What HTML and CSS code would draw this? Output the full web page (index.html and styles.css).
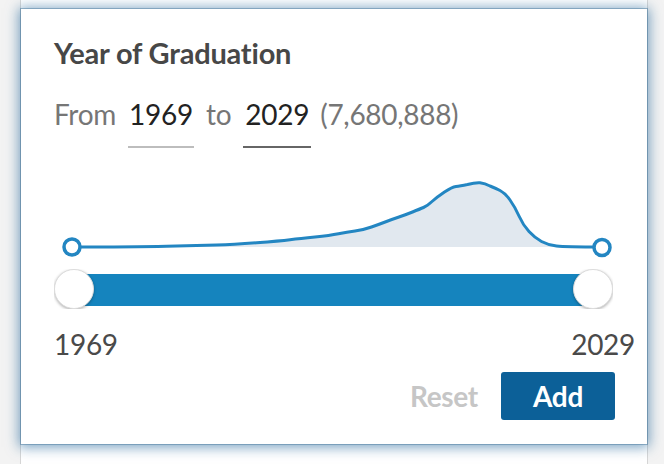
FILE: index.html
```html
<!DOCTYPE html>
<html lang="en">
<head>
<meta charset="utf-8">
<title>Year of Graduation</title>
<link rel="stylesheet" href="styles.css">
</head>
<body>
<div class="panel">
  <div class="card">
    <h2 class="title">Year of Graduation</h2>
    <div class="range-row">
      <span class="muted">From</span>
      <span class="year-input from">1969</span>
      <span class="muted">to</span>
      <span class="year-input to">2029</span>
      <span class="muted count">(7,680,888)</span>
    </div>
    <svg class="chart" width="559" height="90" viewBox="0 0 559 90">
      <path class="area" d="M18,77 Q79,77 112.5,76.25 Q146,75.5 162.5,75 Q179,74.5 202.5,72.75 Q226,71 236,69.75 Q246,68.5 261,67 Q276,65.5 284.5,63.75 Q293,62 301,61 Q309,60 317.5,57 Q326,54 332.5,51.5 Q339,49 345,47 Q351,45 358.5,42 Q366,39 369.5,37.5 Q373,36 378,31.5 Q383,27 390.5,22 Q398,17 402,16.5 Q406,16 413.5,14.5 Q421,12.5 426,12.8 Q431,13.5 436,16 Q441,18 446,20.5 Q451,23 456,30 Q461,37 465,46 Q469,55 475,61.5 Q481,68 487.5,71.5 Q494,75 502.5,76 Q511,77 548,77 Z"/>
      <path class="line" d="M18,77 Q79,77 112.5,76.25 Q146,75.5 162.5,75 Q179,74.5 202.5,72.75 Q226,71 236,69.75 Q246,68.5 261,67 Q276,65.5 284.5,63.75 Q293,62 301,61 Q309,60 317.5,57 Q326,54 332.5,51.5 Q339,49 345,47 Q351,45 358.5,42 Q366,39 369.5,37.5 Q373,36 378,31.5 Q383,27 390.5,22 Q398,17 402,16.5 Q406,16 413.5,14.5 Q421,12.5 426,12.8 Q431,13.5 436,16 Q441,18 446,20.5 Q451,23 456,30 Q461,37 465,46 Q469,55 475,61.5 Q481,68 487.5,71.5 Q494,75 502.5,76 Q511,77 548,77"/>
      <circle class="dot" cx="18" cy="77" r="8"/>
      <circle class="dot" cx="548" cy="77.5" r="8"/>
    </svg>
    <div class="slider">
      <div class="track"></div>
      <span class="thumb"></span>
      <span class="thumb"></span>
    </div>
    <div class="labels">
      <span>1969</span>
      <span>2029</span>
    </div>
    <div class="actions">
      <button class="btn reset" type="button">Reset</button>
      <button class="btn add" type="button">Add</button>
    </div>
  </div>
</div>
</body>
</html>
```

FILE: styles.css
```css
html, body {
  margin: 0;
  padding: 0;
}
body {
  background: #f3f3f3;
  height: 464px;
  overflow: hidden;
  font-family: Lato, "Open Sans", sans-serif;
}
.panel {
  margin-left: 20px;
  width: 628px;
  height: 464px;
  padding-top: 9px;
  box-sizing: border-box;
  background: #fff;
  border-left: 1px solid #d6d6d6;
  border-right: 1px solid #d6d6d6;
}
.card {
  height: 435px;
  box-sizing: border-box;
  padding: 27px 12px 0 33px;
  background: #fff;
  box-shadow: 0 0 0 1px rgba(80, 125, 160, 0.5), 0 1px 12px 2px rgba(25, 95, 150, 0.6);
}
.title {
  margin: 0;
  font-size: 29px;
  line-height: 34px;
  font-weight: 700;
  color: #474747;
  letter-spacing: -0.2px;
}
.range-row {
  margin-top: 27px;
  display: flex;
  align-items: flex-start;
  gap: 12px;
  font-size: 28px;
  line-height: 34px;
  letter-spacing: -0.3px;
}
.muted {
  color: #767676;
}
.count {
  margin-left: -3px;
}
.year-input {
  color: #222;
  text-align: center;
  padding-bottom: 15px;
}
.year-input.from {
  width: 66px;
  border-bottom: 2px solid #bdbdbd;
}
.year-input.to {
  width: 68px;
  border-bottom: 2px solid #666;
}
.chart {
  display: block;
  margin-top: 22px;
}
.area {
  fill: #e1e8ef;
}
.line {
  fill: none;
  stroke: #2386c2;
  stroke-width: 3;
  stroke-linejoin: round;
  stroke-linecap: round;
}
.dot {
  fill: #fff;
  stroke: #2386c2;
  stroke-width: 3.5;
}
.slider {
  position: relative;
  margin-top: 9px;
  width: 559px;
  height: 40px;
  overflow: hidden;
  display: flex;
  justify-content: space-between;
  align-items: center;
}
.track {
  position: absolute;
  left: 20px;
  right: 20px;
  top: 5px;
  height: 32px;
  background: #1584be;
}
.thumb {
  position: relative;
  width: 40px;
  height: 40px;
  box-sizing: border-box;
  border-radius: 50%;
  background: #fff;
  border: 1px solid #dcdcdc;
  box-shadow: 0 1px 3px rgba(0, 0, 0, 0.3);
}
.labels {
  margin-top: 18px;
  display: flex;
  justify-content: space-between;
  font-size: 28px;
  line-height: 34px;
  color: #4a4a4a;
  letter-spacing: -0.3px;
}
.actions {
  margin-top: 11px;
  margin-right: 20px;
  display: flex;
  justify-content: flex-end;
  align-items: center;
  gap: 23px;
}
.btn {
  font-family: Lato, "Open Sans", sans-serif;
  font-size: 28px;
  font-weight: 700;
  line-height: 48px;
  height: 48px;
  border: 0;
  padding: 0;
  margin: 0;
  letter-spacing: -0.3px;
}
.reset {
  background: none;
  color: #c6c6c6;
}
.add {
  width: 114px;
  border-radius: 3px;
  background: #0c6098;
  color: #fff;
}
```
